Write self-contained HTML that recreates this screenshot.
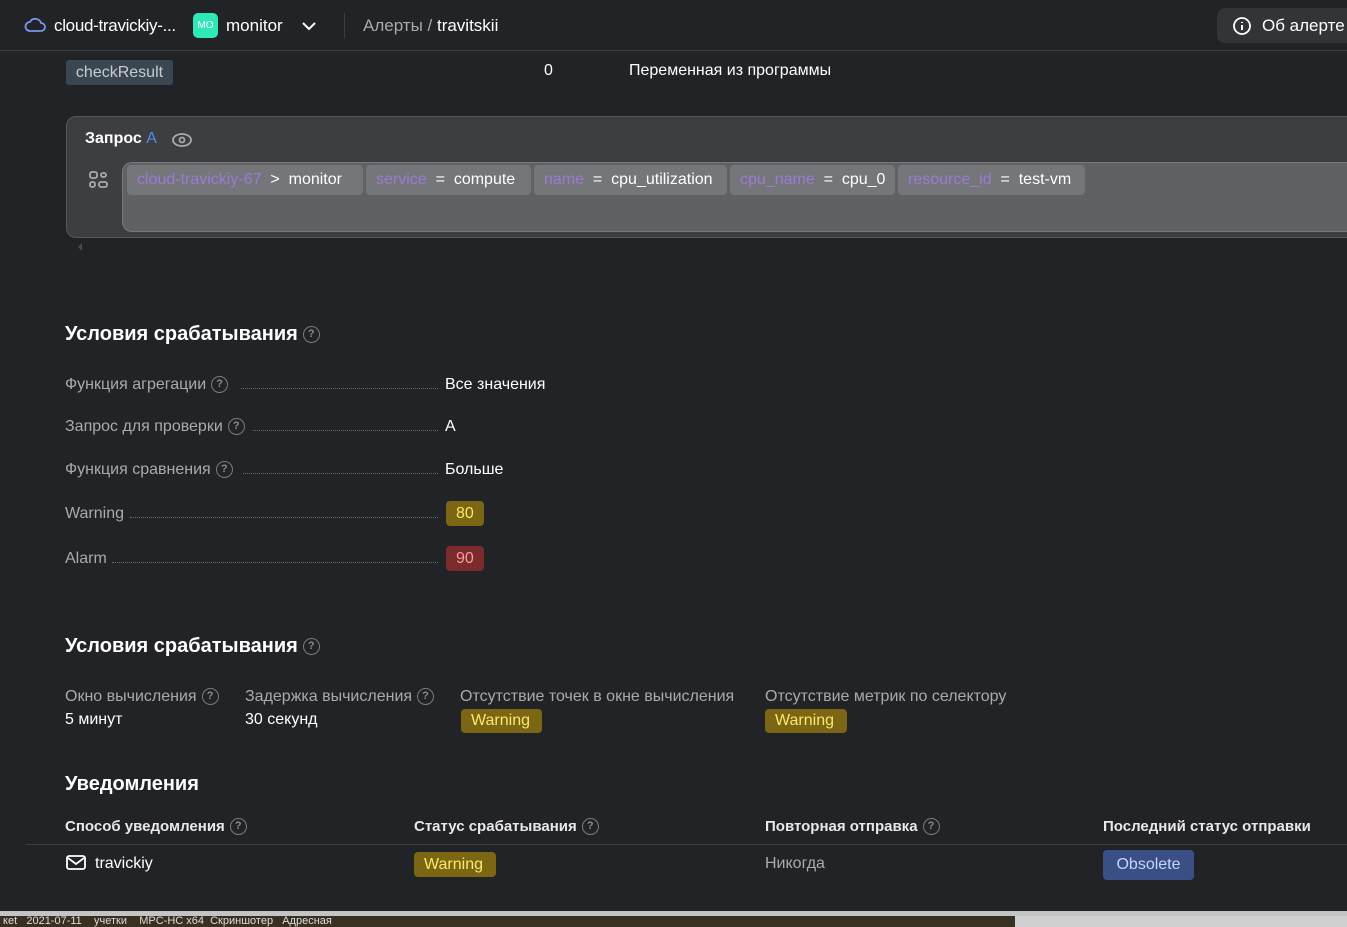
<!DOCTYPE html>
<html><head><meta charset="utf-8"><style>
*{margin:0;padding:0;box-sizing:border-box}
body{width:1347px;height:927px;overflow:hidden;background:#222327;font-family:"Liberation Sans","Noto Sans CJK SC",sans-serif;color:#fff;position:relative;font-size:16px}
.a{position:absolute;white-space:nowrap}
.g{color:#a9aaad}
.q{display:inline-block;width:17px;height:17px;border:1.5px solid #7a7b7e;border-radius:50%;color:#8a8b8e;font-size:11px;text-align:center;line-height:14px;vertical-align:1px;margin-left:5px;font-weight:bold;position:relative;top:-1px}
.h .q{vertical-align:2px}
.dot{position:absolute;border-bottom:1px dotted #6a6b6e;height:1px}
.h{font-size:20px;font-weight:bold}
.tag{position:absolute;border-radius:4px;padding:0 10px;height:24px;line-height:24px;font-size:16px}
.w{background:#7a6613;color:#ffe66b}
.chip{display:inline-block;background:#75767a;border-radius:4px;height:30px;line-height:30px;padding:0 10px;margin-right:3px;font-size:16px}
.p{color:#9c79d6}
</style></head><body>
<div class="a" style="left:0;top:50px;width:1347px;height:1px;background:#3b3c40"></div>
<svg class="a" style="left:24px;top:16px" width="22" height="18" viewBox="0 0 22 18"><path d="M6 15h11a4 4 0 0 0 0-8 6 6 0 0 0-11-1 4.5 4.5 0 0 0 0 9z" fill="none" stroke="#7b96e8" stroke-width="1.8"/></svg>
<div class="a" style="left:54px;top:16px;font-size:17px;letter-spacing:-0.3px">cloud-travickiy-...</div>
<div class="a" style="left:193px;top:13px;width:25px;height:25px;background:#2ee8b6;border-radius:5px;font-size:10px;text-align:center;line-height:25px;color:#fff">MO</div>
<div class="a" style="left:226px;top:16px;font-size:17px">monitor</div>
<svg class="a" style="left:301px;top:20px" width="16" height="12"><path d="M2 3l6 6 6-6" fill="none" stroke="#fff" stroke-width="2"/></svg>
<div class="a" style="left:344px;top:13px;width:1px;height:25px;background:#3b3c40"></div>
<div class="a" style="left:363px;top:16px;font-size:17px"><span class="g">Алерты /</span> travitskii</div>
<div class="a" style="left:1217px;top:8px;width:140px;height:35px;background:#333438;border-radius:8px"></div>
<svg class="a" style="left:1232px;top:16px" width="20" height="20"><circle cx="10" cy="10" r="8" fill="none" stroke="#fff" stroke-width="1.8"/><path d="M10 9v5M10 6v1" stroke="#fff" stroke-width="2"/></svg>
<div class="a" style="left:1262px;top:16px;font-size:17px">Об алерте</div>

<div class="a" style="left:66px;top:60px;height:25px;width:107px;background:#3a4752;border-radius:3px;line-height:25px;color:#c7ccd3;text-align:center">checkResult</div>
<div class="a" style="left:544px;top:62px">0</div>
<div class="a" style="left:629px;top:62px">Переменная из программы</div>

<div class="a" style="left:66px;top:116px;width:1300px;height:122px;background:#3d3e42;border:1px solid #56575b;border-radius:10px"></div>
<div class="a" style="left:85px;top:130px;font-weight:bold;font-size:16px">Запрос <span style="color:#5b88f0;font-weight:normal">A</span></div>
<svg class="a" style="left:171px;top:131px" width="22" height="18"><ellipse cx="11" cy="9" rx="9" ry="6" fill="none" stroke="#a9aaad" stroke-width="1.8"/><circle cx="11" cy="9" r="2.5" fill="none" stroke="#a9aaad" stroke-width="1.8"/></svg>
<svg class="a" style="left:89px;top:171px" width="20" height="18" fill="none" stroke="#a9aaad" stroke-width="1.8"><rect x="1" y="1" width="7" height="6" rx="2"/><rect x="12" y="2" width="5" height="4" rx="2"/><rect x="1" y="11" width="5" height="5" rx="2"/><rect x="10" y="11" width="8" height="5" rx="2"/></svg>
<div class="a" style="left:122px;top:162px;width:1240px;height:70px;background:#606165;border:1px solid #77787c;border-radius:10px"></div>
<div class="a" style="left:127px;top:165px;display:flex">
<span class="chip" style="width:236px"><span class="p">cloud-travickiy-67</span> &nbsp;&gt;&nbsp; monitor</span>
<span class="chip" style="width:165px"><span class="p">service</span> &nbsp;=&nbsp; compute</span>
<span class="chip" style="width:193px"><span class="p">name</span> &nbsp;=&nbsp; cpu_utilization</span>
<span class="chip" style="width:165px"><span class="p">cpu_name</span> &nbsp;=&nbsp; cpu_0</span>
<span class="chip" style="width:187px"><span class="p">resource_id</span> &nbsp;=&nbsp; test-vm</span></div>
<div class="a" style="left:74px;top:243px;width:0;height:0;border:4px solid transparent;border-right-color:#4a4b4f"></div>

<div class="a h" style="left:65px;top:323px">Условия срабатывания<span class="q">?</span></div>
<div class="a g" style="left:65px;top:376px">Функция агрегации<span class="q">?</span></div><div class="dot" style="left:241px;top:388px;width:197px"></div>
<div class="a" style="left:445px;top:376px">Все значения</div>
<div class="a g" style="left:65px;top:418px">Запрос для проверки<span class="q">?</span></div><div class="dot" style="left:253px;top:430px;width:185px"></div>
<div class="a" style="left:445px;top:418px">A</div>
<div class="a g" style="left:65px;top:461px">Функция сравнения<span class="q">?</span></div><div class="dot" style="left:243px;top:473px;width:195px"></div>
<div class="a" style="left:445px;top:461px">Больше</div>
<div class="a g" style="left:65px;top:505px">Warning</div><div class="dot" style="left:130px;top:517px;width:308px"></div>
<div class="tag w" style="left:446px;top:501px;height:25px;line-height:25px">80</div>
<div class="a g" style="left:65px;top:550px">Alarm</div><div class="dot" style="left:112px;top:562px;width:326px"></div>
<div class="tag" style="left:446px;top:546px;height:25px;line-height:25px;background:#7a2b2b;color:#ff9a9a">90</div>

<div class="a h" style="left:65px;top:635px">Условия срабатывания<span class="q">?</span></div>
<div class="a g" style="left:65px;top:688px">Окно вычисления<span class="q">?</span></div>
<div class="a" style="left:65px;top:711px">5 минут</div>
<div class="a g" style="left:245px;top:688px">Задержка вычисления<span class="q">?</span></div>
<div class="a" style="left:245px;top:711px">30 секунд</div>
<div class="a g" style="left:460px;top:688px">Отсутствие точек в окне вычисления</div>
<div class="tag w" style="left:461px;top:709px;width:81px">Warning</div>
<div class="a g" style="left:765px;top:688px">Отсутствие метрик по селектору</div>
<div class="tag w" style="left:765px;top:709px;width:82px">Warning</div>

<div class="a h" style="left:65px;top:773px">Уведомления</div>
<div class="a" style="left:65px;top:818px;font-weight:bold;color:#e8e8e8;font-size:15px">Способ уведомления<span class="q">?</span></div>
<div class="a" style="left:414px;top:818px;font-weight:bold;color:#e8e8e8;font-size:15px">Статус срабатывания<span class="q">?</span></div>
<div class="a" style="left:765px;top:818px;font-weight:bold;color:#e8e8e8;font-size:15px">Повторная отправка<span class="q">?</span></div>
<div class="a" style="left:1103px;top:818px;font-weight:bold;color:#e8e8e8;font-size:15px">Последний статус отправки</div>
<div class="a" style="left:26px;top:844px;width:1321px;height:1px;background:#3b3c40"></div>
<svg class="a" style="left:66px;top:855px" width="20" height="15" fill="none" stroke="#fff" stroke-width="1.8"><rect x="1" y="1" width="18" height="13" rx="2"/><path d="M2 3l8 6 8-6"/></svg>
<div class="a" style="left:95px;top:855px">travickiy</div>
<div class="tag w" style="left:414px;top:852px;height:25px;line-height:25px;width:82px">Warning</div>
<div class="a g" style="left:765px;top:855px">Никогда</div>
<div class="tag" style="left:1103px;top:850px;height:30px;line-height:30px;background:#3a4f85;color:#c5d4ff;width:91px;text-align:center;padding:0">Obsolete</div>

<div class="a" style="left:0;top:911px;width:1347px;height:5px;background:#c4c4c4"></div>
<div class="a" style="left:0;top:916px;width:1015px;height:11px;background:#3a3022;font-size:11px;color:#ddd;line-height:11px">&nbsp;кеt &nbsp; 2021-07-11 &nbsp;&nbsp; учетки &nbsp;&nbsp; MPC-HC x64 &nbsp;Скриншотер &nbsp; Адресная</div>
<div class="a" style="left:1015px;top:916px;width:332px;height:11px;background:#d0d0d0"></div>
</body></html>
